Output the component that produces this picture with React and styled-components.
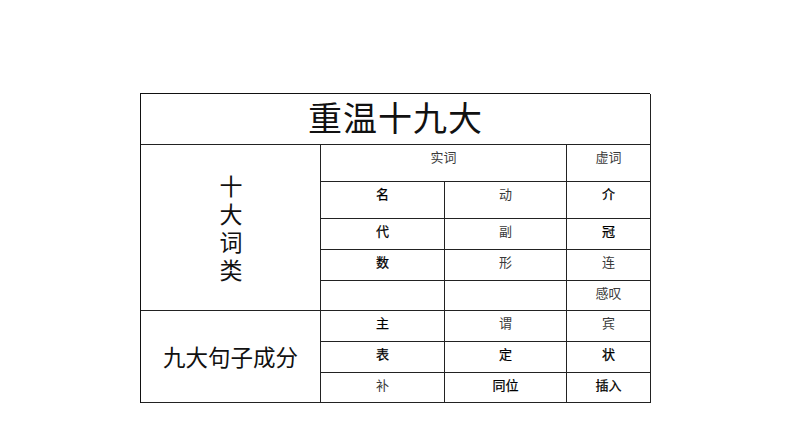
import React from "react";
import styled, { createGlobalStyle } from "styled-components";

const GlobalStyle = createGlobalStyle`
  html, body {
    margin: 0;
    padding: 0;
    background: #ffffff;
  }
  body {
    font-family: "Noto Sans CJK SC", "Noto Sans", sans-serif;
    color: #111;
  }
`;

const Page = styled.div`
  width: 794px;
  height: 447px;
  box-sizing: border-box;
  padding: 93px 0 0 140px;
`;

const Table = styled.div`
  display: grid;
  grid-template-columns: 180px 124px 122px 84px;
  grid-template-rows: 51px 37px 37px 31px 31px 30px 31px 31px 30px;
  width: 510px;
  box-sizing: border-box;
  border-top: 1px solid #111;
  border-left: 1px solid #111;
`;

const Cell = styled.div`
  box-sizing: border-box;
  border-right: 1px solid #222;
  border-bottom: 1px solid #222;
  grid-column: ${(p) => p.col || "auto"};
  grid-row: ${(p) => p.row || "auto"};
  text-align: center;
  font-size: 13px;
  line-height: 18px;
  padding-top: 3px;
  font-weight: 400;
  color: ${(p) => (p.strong ? "#000" : "#3a3a3a")};
  -webkit-text-stroke: ${(p) => (p.strong ? "0.25px #000" : "0")};
`;

const TitleCell = styled(Cell)`
  display: flex;
  align-items: center;
  justify-content: center;
  padding: 0 0 4px;
  font-size: 34px;
  line-height: 1;
  color: #111;
  letter-spacing: 1px;
`;

const SideCell = styled(Cell)`
  display: flex;
  align-items: center;
  justify-content: center;
  padding: 0;
  color: #111;
`;

const VerticalLabel = styled.div`
  writing-mode: vertical-rl;
  text-orientation: upright;
  font-size: 23px;
  line-height: 1;
  letter-spacing: 5px;
  margin-top: 6px;
`;

const SideLabel = styled.div`
  font-size: 22.5px;
  line-height: 1;
`;

const wordRows = [
  [{ t: "名", s: true }, { t: "动" }, { t: "介", s: true }],
  [{ t: "代", s: true }, { t: "副" }, { t: "冠", s: true }],
  [{ t: "数", s: true }, { t: "形" }, { t: "连" }],
  [{ t: "" }, { t: "" }, { t: "感叹" }],
];

const partRows = [
  [{ t: "主", s: true }, { t: "谓" }, { t: "宾" }],
  [{ t: "表", s: true }, { t: "定", s: true }, { t: "状", s: true }],
  [{ t: "补" }, { t: "同位", s: true }, { t: "插入", s: true }],
];

export default function App() {
  return (
    <>
      <GlobalStyle />
      <Page>
        <Table>
          <TitleCell col="1 / 5" row="1">重温十九大</TitleCell>

          <SideCell col="1" row="2 / 7">
            <VerticalLabel>十大词类</VerticalLabel>
          </SideCell>
          <Cell col="2 / 4" row="2">实词</Cell>
          <Cell col="4" row="2">虚词</Cell>
          {wordRows.map((r, i) =>
            r.map((c, j) => (
              <Cell key={`w${i}${j}`} col={`${j + 2}`} row={`${i + 3}`} strong={c.s}>
                {c.t}
              </Cell>
            ))
          )}

          <SideCell col="1" row="7 / 10">
            <SideLabel>九大句子成分</SideLabel>
          </SideCell>
          {partRows.map((r, i) =>
            r.map((c, j) => (
              <Cell key={`p${i}${j}`} col={`${j + 2}`} row={`${i + 7}`} strong={c.s}>
                {c.t}
              </Cell>
            ))
          )}
        </Table>
      </Page>
    </>
  );
}
